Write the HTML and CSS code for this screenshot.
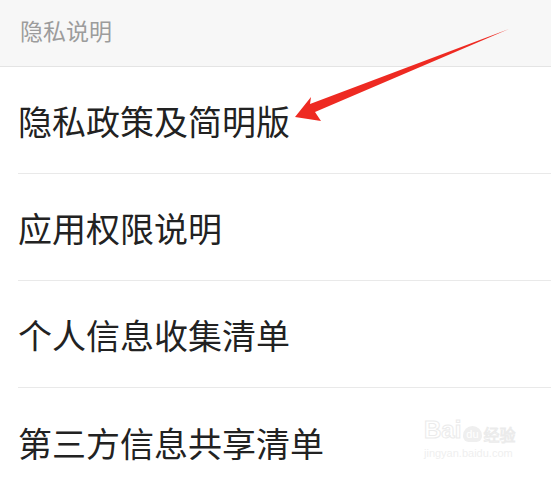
FILE: index.html
```html
<!DOCTYPE html>
<html lang="zh">
<head>
<meta charset="utf-8">
<link rel="stylesheet" href="styles.css">
</head>
<body>
<div class="page">
  <div class="header">隐私说明</div>
  <ul class="list">
    <li class="row"><span>隐私政策及简明版</span></li>
    <li class="row"><span>应用权限说明</span></li>
    <li class="row"><span>个人信息收集清单</span></li>
    <li class="row last"><span>第三方信息共享清单</span></li>
  </ul>
  <svg class="arrow" width="551" height="479" viewBox="0 0 551 479">
    <polygon points="509,29 310,104 311,97 295,117 321,121 315,112" fill="#ee2a22"/>
  </svg>
  <div class="watermark">
    <div class="wm-top"><span class="wm-bai">Bai</span><span class="wm-du">du</span><span class="wm-jy">经验</span></div>
    <div class="wm-url">jingyan.baidu.com</div>
  </div>
</div>
</body>
</html>
```
FILE: styles.css
```css
html, body {
  margin: 0;
  padding: 0;
  background: #ffffff;
}
.page {
  position: relative;
  width: 551px;
  height: 479px;
  overflow: hidden;
  font-family: "Noto Sans CJK SC", "Noto Sans", sans-serif;
}
.header {
  height: 67px;
  box-sizing: border-box;
  padding-left: 20px;
  padding-bottom: 6px;
  display: flex;
  align-items: center;
  background: #f7f7f7;
  border-bottom: 1px solid #e4e4e4;
  color: #9c9c9c;
  font-size: 23px;
  line-height: 1;
}
.list {
  list-style: none;
  margin: 0;
  padding: 0 0 0 18px;
}
.row {
  height: 107px;
  box-sizing: border-box;
  display: flex;
  align-items: center;
  padding-top: 2px;
  border-bottom: 1px solid #e9e9e9;
  color: #222222;
  font-size: 34px;
  line-height: 1;
}
.row.last { border-bottom: none; }
.arrow {
  position: absolute;
  left: 0;
  top: 0;
}
.watermark {
  position: absolute;
  left: 424px;
  top: 418px;
  font-family: "Liberation Sans", sans-serif;
}
.wm-top {
  display: flex;
  align-items: flex-end;
  gap: 2px;
}
.wm-bai {
  font-size: 24px;
  font-weight: bold;
  line-height: 1;
  color: #fff;
  -webkit-text-stroke: 1px #ebebeb;
}
.wm-du {
  font-size: 11px;
  color: #fff;
  background: #efefef;
  border-radius: 10px 10px 6px 6px;
  padding: 2px 3px;
}
.wm-jy {
  font-family: "Noto Sans CJK SC", sans-serif;
  font-size: 16px;
  line-height: 1;
  color: #fff;
  -webkit-text-stroke: 1px #ebebeb;
}
.wm-url {
  font-size: 11px;
  margin-top: 5px;
  color: #efefef;
}
```
